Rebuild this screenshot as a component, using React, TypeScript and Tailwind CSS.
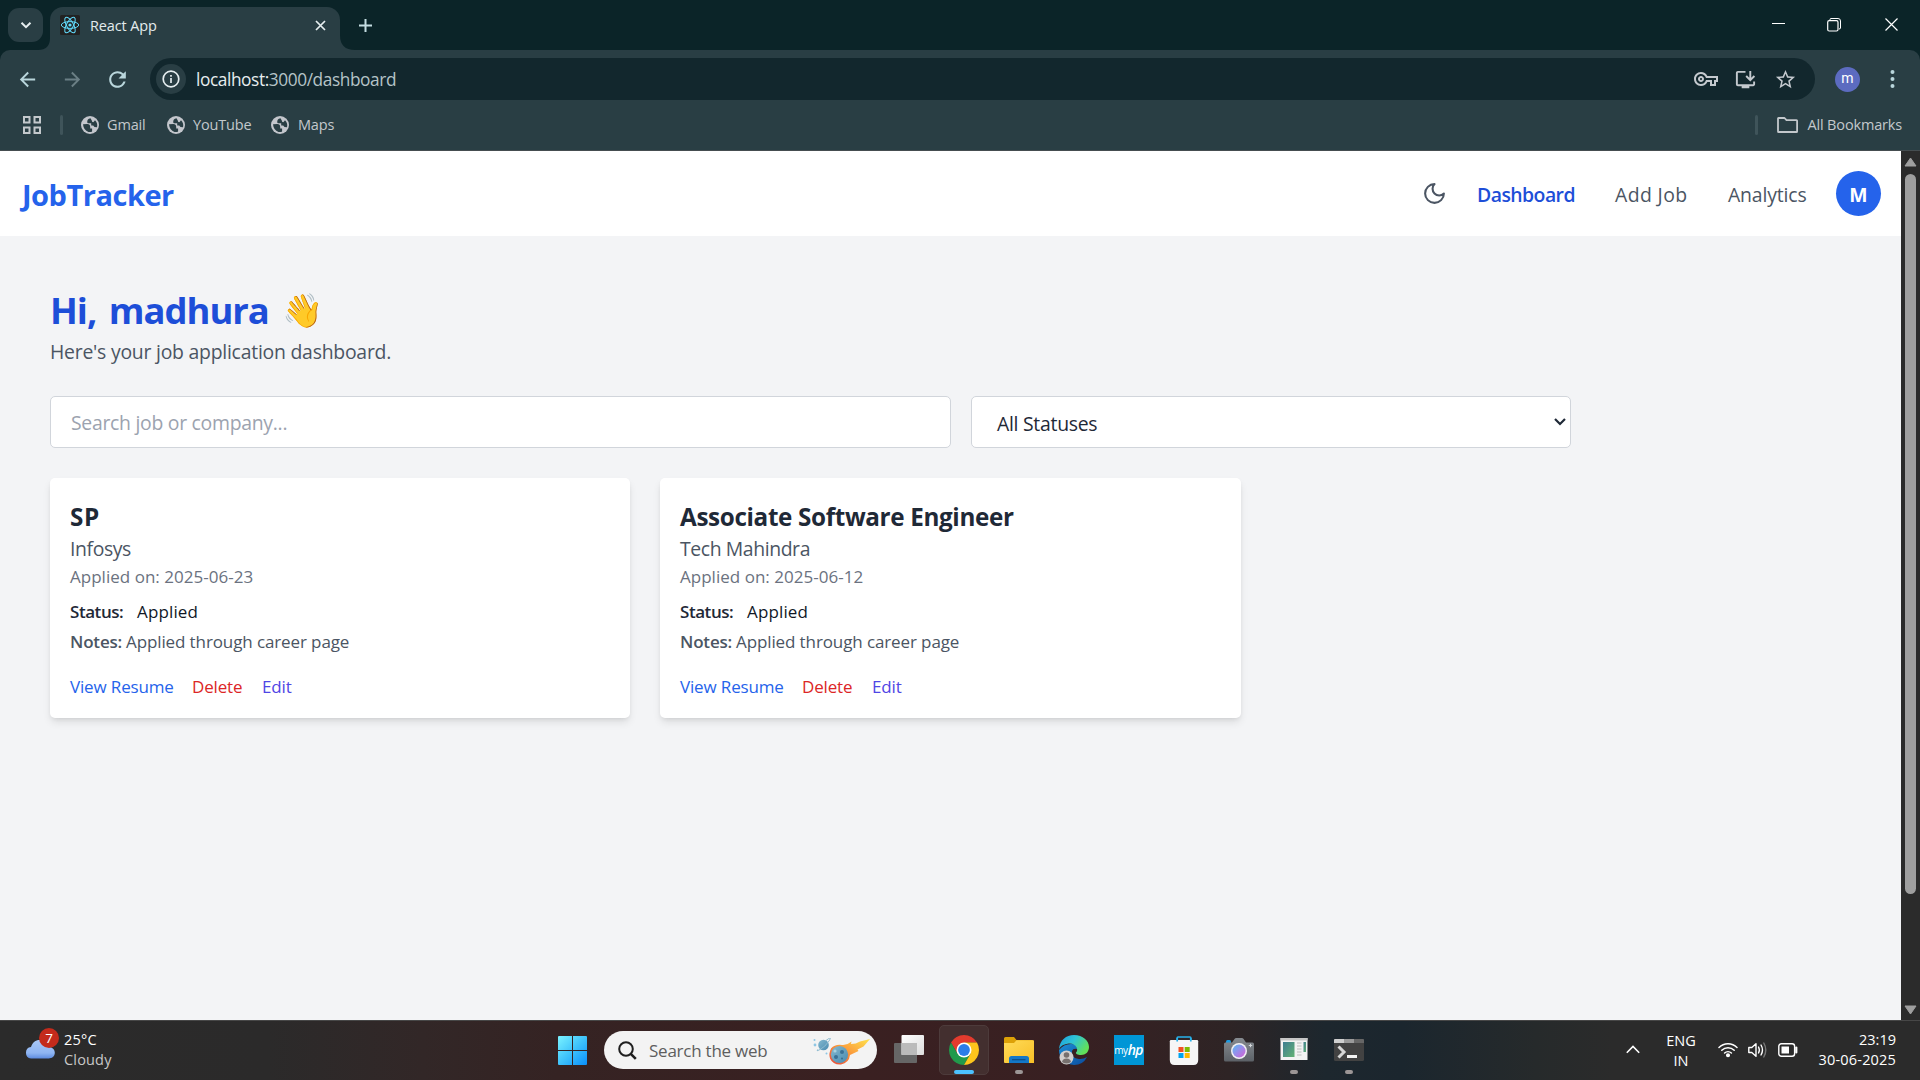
import type { ReactNode } from "react";
import { MdArrowBack, MdArrowForward, MdOutlineInstallDesktop, MdRefresh, MdStarBorder, MdOutlineVpnKey } from "react-icons/md";

type Job = { title: string; company: string; date: string; titleTracking: string; companyTracking: string };

const jobs: Job[] = [
  { title: "SP", company: "Infosys", date: "2025-06-23", titleTracking: "tracking-[0.03em]", companyTracking: "tracking-[-0.02em]" },
  { title: "Associate Software Engineer", company: "Tech Mahindra", date: "2025-06-12", titleTracking: "tracking-[-0.0145em]", companyTracking: "tracking-[-0.0208em]" },
];

function ReactLogo() {
  return (
    <svg width="20" height="20" viewBox="0 0 20 20" fill="none" stroke="#61dafb" strokeWidth="1">
      <rect width="20" height="20" rx="1.5" fill="#222" stroke="none" />
      <ellipse cx="10" cy="10" rx="8.7" ry="3.4" />
      <ellipse cx="10" cy="10" rx="8.7" ry="3.4" transform="rotate(60 10 10)" />
      <ellipse cx="10" cy="10" rx="8.7" ry="3.4" transform="rotate(120 10 10)" />
      <circle cx="10" cy="10" r="1.6" fill="#61dafb" stroke="none" />
    </svg>
  );
}

function Globe() {
  return (
    <svg width="18" height="18" viewBox="0 0 18 18">
      <circle cx="9" cy="9" r="9" fill="#c3c6cc" />
      <path d="M9.500 2.300Q6 3 6.200 6.300q.2 1 1.300.900h2.700v2.200h2l1.300 1.600 2.500.200q1-4.200-2-7l-1.400 1.900q-1.900.300-1.700-1.400z" fill="#293e44" />
      <path d="M2 8.300l4.300-.2q2.900.2 2.900 2.900v1.500h1.900v3q-1.500.9-3.600.400Q2.600 14.500 2 8.300z" fill="#293e44" />
    </svg>
  );
}

function TabStrip() {
  return (
    <div className="flex h-[50px] bg-[#0b2428]">
      <div className="mt-2 ml-2 flex h-[34px] w-[35px] items-center justify-center rounded-[11px] bg-[#293e44]">
        <svg width="12" height="12" viewBox="0 0 12 12" fill="none" stroke="#e6eef0" strokeWidth="2">
          <path d="M1.5 3.8 6 8.2l4.500-4.400" />
        </svg>
      </div>
      <div className="flex w-[7px] items-end justify-end overflow-visible">
        <svg className="-ml-[5px] shrink-0" width="12" height="12" viewBox="0 0 12 12">
          <path d="M12 0v12H0Q12 12 12 0z" fill="#293e44" />
        </svg>
      </div>
      <div className="mt-[7px] flex h-[43px] w-[290px] items-start rounded-t-[13px] bg-[#293e44] pt-2 pl-[10px]">
        <ReactLogo />
        <span className="ml-[10px] text-[14.5px] leading-[22px] tracking-[-0.0089em] text-[#e3ebed]">React App</span>
        <svg className="mt-[5px] mr-[14px] ml-auto" width="11" height="11" viewBox="0 0 11 11" stroke="#e6eef0" strokeWidth="1.7">
          <path d="M1 1l9 9M10 1l-9 9" />
        </svg>
      </div>
      <svg className="mt-auto" width="15" height="15" viewBox="0 0 15 15">
        <path d="M0 0v15h15Q0 15 0 0z" fill="#293e44" />
      </svg>
      <svg className="mt-[19px] ml-1" width="13" height="13" viewBox="0 0 13 13" stroke="#c5dde2" strokeWidth="2">
        <path d="M6.500 0v13M0 6.500h13" />
      </svg>
      <div className="mr-[22px] ml-auto flex pt-[18px] text-white">
        <svg width="15" height="14" viewBox="0 0 15 14" stroke="currentColor">
          <path d="M1 5.500h13" />
        </svg>
        <svg className="ml-[41px]" width="14" height="14" viewBox="0 0 14 14" fill="none" stroke="currentColor">
          <path d="M3 2.500V1.500Q3 .5 4 .5h7q2.500 0 2.500 2.500v7q0 1-1.500 1" />
          <rect x=".7" y="2.700" width="10.300" height="10.300" rx="1.500" strokeWidth="1.200" />
        </svg>
        <svg className="ml-[44px]" width="13" height="14" viewBox="0 0 13 14" stroke="currentColor" strokeWidth="1.200">
          <path d="M.5 .5l12 12M12.500 .5l-12 12" />
        </svg>
      </div>
    </div>
  );
}

function Toolbar() {
  return (
    <div className="flex h-[58px] items-center">
      <MdArrowBack className="ml-4 text-[#b9d6dc]" size={23} />
      <MdArrowForward className="ml-[22px] text-[#6b7f85]" size={23} />
      <MdRefresh className="ml-[21px] text-[#b9d6dc]" size={25} />
      <div className="ml-[20px] flex h-[42px] w-[1665px] items-center rounded-full bg-[#12272d] pl-[6px]">
        <div className="flex size-[30px] items-center justify-center rounded-full bg-[#293e44]">
          <svg width="18" height="18" viewBox="0 0 18 18" fill="none" stroke="#e6eef0" strokeWidth="1.700">
            <circle cx="9" cy="9" r="7.800" />
            <path d="M9 8v5M9 5v1.800" />
          </svg>
        </div>
        <span className="ml-[10px] pt-px text-[17.3px] tracking-[-0.024em] text-[#b5c3c7]">
          <span className="text-[#e6edef]">localhost:</span>3000/dashboard
        </span>
        <div className="mr-[18px] ml-auto flex items-center text-[#c4c9ce]">
          <MdOutlineVpnKey size={24} />
          <MdOutlineInstallDesktop className="ml-[16px]" size={23} />
          <MdStarBorder className="ml-[17px]" size={23} />
        </div>
      </div>
      <div className="ml-[20px] flex size-[25px] items-center justify-center rounded-full bg-[#5c6bc0] pb-[2px] font-[Roboto,sans-serif] text-[14px] text-white">m</div>
      <svg className="ml-[30px]" width="5" height="20" viewBox="0 0 5 20" fill="#b9d6dc">
        <circle cx="2.500" cy="3" r="2" />
        <circle cx="2.500" cy="10" r="2" />
        <circle cx="2.500" cy="17" r="2" />
      </svg>
    </div>
  );
}

function BookmarksBar() {
  return (
    <div className="flex h-[42px] items-center pb-[8px] text-[14.5px] tracking-[-0.0115em] text-[#c3c8cc]">
      <svg className="ml-[23px]" width="18" height="18" viewBox="0 0 18 18" fill="none" stroke="currentColor" strokeWidth="2">
        <path d="M1 1h5.500v5.500H1zM11.500 1H17v5.500h-5.500zM1 11.500h5.500V17H1zM11.500 11.500H17V17h-5.500z" />
      </svg>
      <div className="ml-[19px] h-5 w-[3px] rounded bg-[#3f545a]" />
      <div className="ml-[18px]"><Globe /></div>
      <span className="ml-[8px] w-[38px]">Gmail</span>
      <div className="ml-[22px]"><Globe /></div>
      <span className="ml-[8px] w-[58px]">YouTube</span>
      <div className="ml-[20px]"><Globe /></div>
      <span className="ml-[9px]">Maps</span>
      <div className="ml-auto h-5 w-[3px] rounded bg-[#3f545a]" />
      <svg className="ml-[19px]" width="21" height="16" viewBox="0 0 21 16" fill="none" stroke="currentColor" strokeWidth="1.800" strokeLinejoin="round">
        <path d="M1 1.500q0-.5.5-.5H7.500l2 2.200h10q.6 0 .6.600V14.400q0 .6-.6.600H1.600q-.6 0-.6-.6z" />
      </svg>
      <span className="mr-[18px] ml-[10px]">All Bookmarks</span>
    </div>
  );
}

function Header() {
  return (
    <header className="flex h-[85px] items-center bg-white pr-5 pl-[22px] text-[19.4px] text-[#4b5563]">
      <div className="pt-[3px] text-[29px] font-bold tracking-[-0.0165em] text-[#2563eb]">JobTracker</div>
      <svg className="ml-auto" width="25" height="25" viewBox="0 0 24 24" fill="none" stroke="currentColor" strokeWidth="2" strokeLinecap="round" strokeLinejoin="round">
        <path d="M12 3a6 6 0 0 0 9 9 9 9 0 1 1-9-9Z" />
      </svg>
      <nav className="flex pt-[2px]">
        <a className="ml-[30px] w-[98px] font-semibold tracking-[-0.0277em] whitespace-nowrap text-[#1d4ed8]">Dashboard</a>
        <a className="ml-[40px] w-[73px] tracking-[0.02em] whitespace-nowrap">Add Job</a>
        <a className="ml-[40px] w-[78px] tracking-[-0.008em] whitespace-nowrap">Analytics</a>
      </nav>
      <div className="ml-[30px] flex size-[45px] items-center justify-center rounded-full bg-[#2563eb] pt-[2px] text-[19.4px] font-bold text-white">M</div>
    </header>
  );
}

function JobCard({ job }: { job: Job }) {
  return (
    <article className="h-[240px] rounded-[5px] bg-white px-5 pt-[21px] text-[17px] leading-[25px] whitespace-nowrap shadow-[0_5px_8px_-1px_rgb(0_0_0/0.1),0_2px_5px_-2px_rgb(0_0_0/0.1)]">
      <h2 className={`text-[24.25px] leading-[35px] font-bold text-[#1f2937] ${job.titleTracking}`}>{job.title}</h2>
      <p className={`text-[19.4px] leading-[30px] text-[#4b5563] ${job.companyTracking}`}>{job.company}</p>
      <p className="tracking-[0.001em] text-[#6b7280]">Applied on: {job.date}</p>
      <p className="mt-[10px] flex text-[#1f2937]">
        <span className="w-[53px] font-semibold tracking-[-0.026em]">Status:</span>
        <span className="ml-[14px] tracking-[0.0085em] text-[#111827]">Applied</span>
      </p>
      <p className="mt-[5px] flex text-[#4b5563]">
        <span className="w-[56px] font-semibold tracking-[-0.0103em]">Notes:</span>
        <span className="tracking-[-0.0065em]">Applied through career page</span>
      </p>
      <div className="mt-5 flex tracking-[-0.009em]">
        <a className="w-[102px] text-[#2563eb]">View Resume</a>
        <a className="ml-5 w-[50px] text-[#dc2626]">Delete</a>
        <a className="ml-5 text-[#4f46e5]">Edit</a>
      </div>
    </article>
  );
}

function Dashboard() {
  return (
    <main className="h-[784px] bg-[#f3f4f6] pt-[52px] pl-[50px]">
      <h1 className="flex h-[45px] items-center text-[36.4px] font-bold tracking-[-0.0275em] text-[#1d4ed8] [word-spacing:4px]">
        Hi, madhura
        <span className="ml-[14px] font-['Noto_Color_Emoji'] text-[33px] tracking-normal">👋</span>
      </h1>
      <p className="mt-[4px] text-[19.4px] leading-[30px] tracking-[-0.012em] text-[#4b5563]">Here's your job application dashboard.</p>
      <div className="mt-[29px] flex gap-5 text-[19.4px]">
        <div className="flex h-[52px] w-[901px] items-center rounded-[5px] border border-[#d1d5db] bg-white pt-[2px] pl-5 tracking-[-0.0145em] text-[#9ca3af]">Search job or company...</div>
        <div className="flex h-[52px] w-[600px] items-center rounded-[5px] border border-[#d1d5db] bg-white pr-[4px] pl-[25px] tracking-[-0.014em] text-[#1f2937]">
          <span className="pt-[3px]">All Statuses</span>
          <svg className="ml-auto" width="12" height="8" viewBox="0 0 12 8" fill="none" stroke="#1f2937" strokeWidth="2.200">
            <path d="M1 1l5 5 5-5" />
          </svg>
        </div>
      </div>
      <div className="mt-[30px] grid w-[1191px] grid-cols-[580px_581px] gap-[30px]">
        {jobs.map((job) => (
          <JobCard key={job.title} job={job} />
        ))}
      </div>
    </main>
  );
}

function Scrollbar() {
  return (
    <div className="flex w-[19px] flex-col items-center bg-[#2b2b2b]">
      <svg className="mt-[6px]" width="13" height="10" viewBox="0 0 13 10">
        <path d="M6.500 1 12 9H1z" fill="#9f9f9f" stroke="#9f9f9f" strokeLinejoin="round" />
      </svg>
      <div className="mt-[7px] h-[720px] w-[11px] rounded-full bg-[#9f9f9f]" />
      <svg className="mt-auto mb-[5px]" width="13" height="10" viewBox="0 0 13 10">
        <path d="M1 1h11L6.500 9z" fill="#9f9f9f" stroke="#9f9f9f" strokeLinejoin="round" />
      </svg>
    </div>
  );
}

function TaskCell({ children, mark, active }: { children: ReactNode; mark?: boolean; active?: boolean }) {
  return (
    <div className="flex w-[55px] justify-center pt-1">
      <div className={active ? "flex h-[50px] w-[50px] flex-col items-center rounded-[5px] border border-[#4d3b3b] bg-[#432f2f] pt-[9px]" : "flex h-[50px] w-[50px] flex-col items-center pt-[10px]"}>
        {children}
        {active && <div className="mt-[5px] h-1 w-5 rounded-full bg-[#4cc2ff]" />}
        {mark && <div className="mt-[5px] h-1 w-2 rounded-full bg-[#9c9696]" />}
      </div>
    </div>
  );
}

function CloudIcon() {
  return (
    <svg width="30" height="20" viewBox="0 0 30 20">
      <defs>
        <linearGradient id="cloud" x1="0" y1="0" x2="0" y2="1">
          <stop offset="0" stopColor="#a9c8f8" />
          <stop offset=".7" stopColor="#8fb5f2" />
          <stop offset="1" stopColor="#5d8be0" />
        </linearGradient>
      </defs>
      <path d="M6 19.500a5.800 5.800 0 0 1 0-11.500C7.500 3.500 10.500 1 14.500 1c4.500 0 7.500 3 8.300 7 4 0 7 2 7 5.800s-3 5.700-6 5.700z" fill="url(#cloud)" />
    </svg>
  );
}

function StartIcon() {
  return (
    <svg width="29" height="29" viewBox="0 0 29 29">
      <defs>
        <linearGradient id="start" x1="0" y1="0" x2="1" y2="1">
          <stop offset="0" stopColor="#7bf3ff" />
          <stop offset=".5" stopColor="#3fc3fb" />
          <stop offset="1" stopColor="#0a8ffb" />
        </linearGradient>
      </defs>
      <path d="M1 0h13v14H0V1q0-1 1-1zM15 0h13q1 0 1 1v13H15zM0 15h14v14H1q-1 0-1-1zM15 15h14v13q0 1-1 1H15z" fill="url(#start)" />
    </svg>
  );
}

function CometArt() {
  return (
    <svg width="57" height="27" viewBox="0 0 57 27">
      <defs>
        <linearGradient id="flame" x1="0" y1="1" x2="1" y2="0">
          <stop offset="0" stopColor="#e8463a" />
          <stop offset=".5" stopColor="#fb9d3c" />
          <stop offset="1" stopColor="#ffe44d" />
        </linearGradient>
        <linearGradient id="rock" x1="0" y1="0" x2="1" y2="1">
          <stop offset="0" stopColor="#84b9d0" />
          <stop offset="1" stopColor="#4a8bb0" />
        </linearGradient>
      </defs>
      <circle cx="10.500" cy="7" r="5.300" fill="url(#rock)" />
      <path d="M5 11.500Q2 14 7 11.500T16 3t-3-.5" fill="none" stroke="#8ebbd0" strokeWidth="1" />
      <circle cx="1.500" cy="2" r="1" fill="#8fc6e4" />
      <circle cx="2" cy="7" r="1.400" fill="#8fc6e4" />
      <circle cx="13.500" cy="15.500" r="1" fill="#8fc6e4" />
      <path d="M18 10.500Q22 6 29 7q5 .5 9.500-3.500l-.5 2.500q5 0 9-2.500L57 1l-6.500 7.500-6 3 1 1.500-8.500 4q-1 8-9 9.500-8 .5-11-6-1.500-5 1-10z" fill="url(#flame)" />
      <circle cx="26.500" cy="16.500" r="8.600" fill="url(#rock)" />
      <circle cx="29" cy="14" r="2" fill="#3a7196" />
      <circle cx="23" cy="19" r="2" fill="#3a7196" />
      <circle cx="29" cy="20.500" r="1.100" fill="#3a7196" />
      <circle cx="22" cy="13" r="1.600" fill="#a9d2e0" />
    </svg>
  );
}

function TaskViewIcon() {
  return (
    <svg width="30" height="29" viewBox="0 0 30 29">
      <defs>
        <linearGradient id="tv" x1="0" y1="0" x2="1" y2="1">
          <stop offset="0" stopColor="#fff" />
          <stop offset="1" stopColor="#dcdcdc" />
        </linearGradient>
      </defs>
      <rect x="0" y="8" width="23" height="20" rx="1" fill="#666" />
      <rect x="7.500" y="0" width="22.500" height="20" rx="1" fill="url(#tv)" />
      <rect x="7.500" y="8" width="15.500" height="12" fill="#bbb" />
    </svg>
  );
}

function ChromeIcon() {
  return (
    <svg width="30" height="30" viewBox="0 0 30 30">
      <path d="M2.010 7.500a15 15 0 0 1 25.980 0L15 7.500 8.500 18.750z" fill="#e33b2e" />
      <path d="M2.010 7.500a15 15 0 0 0 12.990 22.500l6.500-11.250H8.500z" fill="#219a4b" />
      <path d="M27.990 7.500a15 15 0 0 1-12.990 22.500l6.500-11.250L15 7.500z" fill="#fdc51c" />
      <circle cx="15" cy="15" r="7.500" fill="#fff" />
      <circle cx="15" cy="15" r="5.900" fill="#2b7de9" />
    </svg>
  );
}

function FolderIcon() {
  return (
    <svg width="30" height="30" viewBox="0 0 30 30">
      <defs>
        <linearGradient id="folder" x1="0" y1="0" x2="1" y2="1">
          <stop offset="0" stopColor="#ffdb58" />
          <stop offset="1" stopColor="#f8bf27" />
        </linearGradient>
      </defs>
      <path d="M0 3.500Q0 2 1.500 2H10l2.500 3H28q2 0 2 2v5H0z" fill="#dda107" />
      <path d="M0 8h10l2.500-2.700H29q1 0 1 1V28H1q-1 0-1-1z" fill="url(#folder)" />
      <path d="M5 28v-4.500q0-2.500 2.500-2.500h15q2.500 0 2.500 2.500V28z" fill="#1377c7" />
      <path d="M8 24.700h13.500" stroke="#0c4c85" strokeWidth="1.200" />
    </svg>
  );
}

function EdgeIcon() {
  return (
    <svg width="30" height="30" viewBox="0 0 30 30">
      <defs>
        <linearGradient id="edgeTop" x1="0" y1="0" x2="1" y2=".5">
          <stop offset="0" stopColor="#1a9de0" />
          <stop offset=".5" stopColor="#2fc4d5" />
          <stop offset="1" stopColor="#62e05a" />
        </linearGradient>
        <linearGradient id="edgeLow" x1="0" y1="0" x2="1" y2="1">
          <stop offset="0" stopColor="#1b8fd8" />
          <stop offset="1" stopColor="#0b4a9b" />
        </linearGradient>
      </defs>
      <path d="M0 15A15 15 0 0 1 12 9q6 0 6 5-4-1-5 2-1 7 7 8 4 .5 8-2-4 8-13 8A15 15 0 0 1 0 15z" fill="url(#edgeLow)" />
      <path d="M0 14C1 5 7 0 15 0c9 0 15 6 15 12 0 5-3.500 8-8 8-3.500 0-5.500-1.200-5-2.500 1.500-1.500 1.300-3 .8-4.500C16.500 9.500 13 8 9.500 8.500 5 9 1.500 11 0 14z" fill="url(#edgeTop)" />
      <circle cx="7.500" cy="22.500" r="7" fill="#d2cfce" />
      <circle cx="7.500" cy="20" r="2.800" fill="#77706e" />
      <path d="M3 27q.5-3.500 4.500-3.500T12 27q-4.500 3-9 0z" fill="#77706e" />
    </svg>
  );
}

function StoreIcon() {
  return (
    <svg width="30" height="30" viewBox="0 0 30 30">
      <path d="M8.200 6V2.800Q8.200 2 9 2h12q.8 0 .8.800V6" fill="none" stroke="#27b1ea" strokeWidth="1.700" />
      <path d="M2 5h26q1.200 0 1.200 1.200V25q0 5-4.700 5H5.500Q.8 30 .8 25V6.200Q.8 5 2 5z" fill="#f6f6f6" />
      <path d="M8.200 6.500V3M21.800 6.500V3" stroke="#27b1ea" strokeWidth="1.700" />
      <path d="M9.500 12h5v5h-5z" fill="#f25022" />
      <path d="M15.700 12h5v5h-5z" fill="#7fba00" />
      <path d="M9.500 18h5v5h-5z" fill="#00a4ef" />
      <path d="M15.700 18h5v5h-5z" fill="#ffb900" />
    </svg>
  );
}

function CameraIcon() {
  return (
    <svg width="30" height="30" viewBox="0 0 30 30">
      <defs>
        <linearGradient id="lens" x1="0" y1="0" x2="1" y2="1">
          <stop offset="0" stopColor="#55bdf3" />
          <stop offset=".5" stopColor="#9b8bea" />
          <stop offset="1" stopColor="#d65fd3" />
        </linearGradient>
        <linearGradient id="body" x1="0" y1="0" x2="0" y2="1">
          <stop offset="0" stopColor="#868b90" />
          <stop offset="1" stopColor="#5c6167" />
        </linearGradient>
      </defs>
      <rect x="2" y="5" width="5" height="4" rx="1.500" fill="#1b9be3" />
      <path d="M0 9q0-1.500 1.500-1.500H8L10.500 4q.6-1 1.800-1h5.500q1.200 0 1.800 1L22 7.500h6.500Q30 7.500 30 9v16q0 1.500-1.500 1.500h-27Q0 26.500 0 25z" fill="url(#body)" />
      <circle cx="15" cy="16" r="8" fill="#f1eff4" />
      <circle cx="15" cy="16" r="6.500" fill="url(#lens)" />
      <path d="M26.500 8.800v3.400M24.800 10.500h3.400" stroke="#d4d7da" />
    </svg>
  );
}

function EditorIcon() {
  return (
    <svg width="30" height="30" viewBox="0 0 30 30">
      <defs>
        <linearGradient id="pane" x1="0" y1="0" x2="1" y2="1">
          <stop offset="0" stopColor="#3f7d92" />
          <stop offset="1" stopColor="#63b274" />
        </linearGradient>
      </defs>
      <path d="M1.500 3h27v22h-27z" fill="#f3f3f3" />
      <path d="M1.500 3h27v2.500h-27z" fill="#c6c6c6" />
      <path d="M4 7h11.500v15H4z" fill="url(#pane)" />
      <path d="M18 8h4.500M18 11h4.500M18 14h4.500M18 17h4.500M18 20h4.500" stroke="#cfcfcf" strokeWidth="1.400" />
      <path d="M24.500 7H27v10h-2.500z" fill="url(#pane)" />
    </svg>
  );
}

function TerminalIcon() {
  return (
    <svg width="30" height="30" viewBox="0 0 30 30">
      <rect y="4" width="30" height="22" rx="1.500" fill="#424242" />
      <path d="M1 4h9v4H0V5q0-1 1-1z" fill="#cfcfcf" />
      <path d="M10 4h10v4H10z" fill="#9a9a9a" />
      <path d="M20 4h9q1 0 1 1v3H20z" fill="#666" />
      <path d="M4.500 11.500l5.500 5.500-5.500 5.500" fill="none" stroke="#d6d6d6" strokeWidth="3" />
      <path d="M13 21.500h10" stroke="#f4f4f4" strokeWidth="3" />
    </svg>
  );
}

function Taskbar() {
  return (
    <footer className="flex h-[60px] border-t border-[#474747] bg-[linear-gradient(90deg,#2b2b2b_0%,#2b2a2a_14%,#322727_22%,#352323_29%,#3a2021_45%,#382022_56%,#2e2425_64%,#1d272e_69%,#1b262e_73%,#262a2b_80%,#2b2b2b_84%)] text-[14.5px] leading-5 text-white">
      <div className="flex w-[545px] pl-[25px]">
        <div className="relative h-[45px] w-[34px] pt-[18px]">
          <CloudIcon />
          <div className="absolute top-[7px] left-[14px] flex size-5 items-center justify-center rounded-full bg-[#c42b1c] text-[13.5px]">7</div>
        </div>
        <div className="ml-[5px] pt-[9px]">
          <div className="tracking-[0.0166em]">25°C</div>
          <div className="tracking-[0.012em] text-[#c8c8c8]">Cloudy</div>
        </div>
      </div>
      <div className="flex w-[55px] justify-center pt-[15px]">
        <StartIcon />
      </div>
      <div className="mt-[10px] ml-1 flex h-[38px] w-[273px] items-center rounded-full bg-[#f3f3f3] pl-[14px]">
        <svg width="19" height="19" viewBox="0 0 19 19" fill="none" stroke="#1f1f1f" strokeWidth="2">
          <circle cx="8" cy="8" r="6.800" />
          <path d="M12.800 12.800l5 5" strokeWidth="2.600" />
        </svg>
        <span className="ml-[12px] pt-[2px] text-[17px] tracking-[-0.014em] text-[#5e5e5e]">Search the web</span>
        <span className="mt-[2px] mr-[7px] ml-auto">
          <CometArt />
        </span>
      </div>
      <div className="ml-1 flex">
        <TaskCell><TaskViewIcon /></TaskCell>
        <TaskCell active><ChromeIcon /></TaskCell>
        <TaskCell mark><FolderIcon /></TaskCell>
        <TaskCell><EdgeIcon /></TaskCell>
        <TaskCell>
          <div className="flex size-[30px] items-center justify-center bg-[#0096d6] pb-px tracking-tight">
            <span className="text-[10px] leading-none">my</span>
            <span className="text-[14px] leading-none font-semibold tracking-tighter italic">hp</span>
          </div>
        </TaskCell>
        <TaskCell><StoreIcon /></TaskCell>
        <TaskCell><CameraIcon /></TaskCell>
        <TaskCell mark><EditorIcon /></TaskCell>
        <TaskCell mark><TerminalIcon /></TaskCell>
      </div>
      <div className="mr-6 ml-auto flex">
        <svg className="mt-[24px]" width="14" height="9" viewBox="0 0 14 9" fill="none" stroke="#fff" strokeWidth="1.600">
          <path d="M.8 7.800 7 1.500l6.200 6.300" />
        </svg>
        <div className="ml-[26px] w-[30px] pt-[10px] text-center">ENG IN</div>
        <svg className="mt-[20px] ml-[22px]" width="20" height="17" viewBox="0 0 20 17" fill="none" stroke="#fff" strokeWidth="1.500" strokeLinecap="round">
          <path d="M1 6.500a12.500 12.500 0 0 1 18 0M3.800 9.300a8.700 8.700 0 0 1 12.400 0M6.600 12a5 5 0 0 1 6.800 0" />
          <circle cx="10" cy="14.300" r="1.300" fill="#fff" />
        </svg>
        <svg className="mt-[20px] ml-[10px]" width="20" height="18" viewBox="0 0 20 18" fill="none" stroke="#fff" strokeWidth="1.400" strokeLinecap="round" strokeLinejoin="round">
          <path d="M.8 6.500v5h3L8 15.200V2.800L3.800 6.500z" />
          <path d="M10.500 6q1.700 3 0 6M13 4q3 5 0 10" />
          <path d="M15.800 2q4 7 0 14" stroke="#777" />
        </svg>
        <svg className="mt-[22px] ml-[10px]" width="20" height="14" viewBox="0 0 20 14" fill="none" stroke="#fff" strokeWidth="1.400">
          <rect x=".8" y=".8" width="15.800" height="12.400" rx="2.500" />
          <rect x="3.500" y="3.500" width="7.500" height="7" fill="#fff" stroke="none" />
          <path d="M18.300 4.500v5" strokeWidth="2.200" strokeLinecap="round" />
        </svg>
        <div className="ml-[20px] w-[78px] pt-[9px] text-right whitespace-nowrap">
          <div>23:19</div>
          <div className="tracking-[0.012em]">30-06-2025</div>
        </div>
      </div>
    </footer>
  );
}

export default function App() {
  return (
    <div className="h-[1080px] w-[1920px] overflow-hidden font-['Open_Sans','Noto_Sans',sans-serif] leading-normal">
      <div className="bg-[#0b2428]">
        <TabStrip />
        <div className="h-[101px] rounded-t-[10px] border-b border-[#454d50] bg-[#293e44]">
          <Toolbar />
          <BookmarksBar />
        </div>
      </div>
      <div className="flex h-[869px]">
        <div className="w-[1901px]">
          <Header />
          <Dashboard />
        </div>
        <Scrollbar />
      </div>
      <Taskbar />
    </div>
  );
}
